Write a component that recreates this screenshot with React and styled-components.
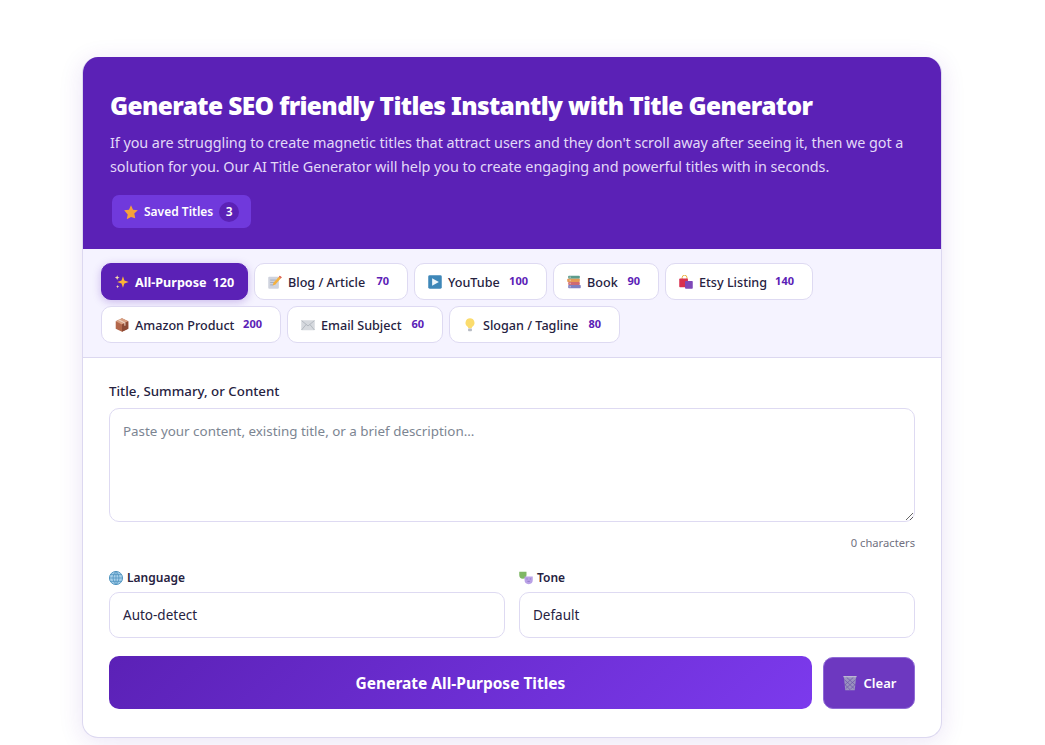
import React from 'react'
import styled, { createGlobalStyle } from 'styled-components'

const GlobalStyle = createGlobalStyle`
  html, body {
    margin: 0;
    background: #fff;
    font-family: "Noto Sans", "Open Sans", sans-serif;
    color: #1e1b3a;
    overflow: hidden;
  }
  * { box-sizing: border-box; }
`

const Page = styled.div`
  padding: 57px 0 0 82px;
  height: 745px;
  overflow: hidden;
`

const Card = styled.div`
  width: 860px;
  background: #fff;
  border: 1px solid #dcd8f0;
  border-top: 0;
  border-radius: 16px;
  overflow: hidden;
  box-shadow: 0 4px 24px rgba(91, 33, 182, 0.12);
`

const Header = styled.header`
  background: #5b21b6;
  height: 192px;
  padding: 32px 27px 0;
  color: #fff;
`

const Title = styled.h1`
  margin: 0;
  font-size: 24.5px;
  line-height: 34px;
  font-weight: 900;
  letter-spacing: -0.63px;
`

const Intro = styled.p`
  margin: 8px 0 0;
  font-size: 14.4px;
  line-height: 24px;
  color: #e2d9f8;
  letter-spacing: -0.056px;
`

const SavedButton = styled.button`
  display: inline-flex;
  align-items: center;
  height: 33px;
  margin: 16px 0 0 2px;
  padding: 0 12px;
  gap: 6px;
  border: 0;
  border-radius: 7px;
  background: #7039dc;
  color: #fff;
  font: 600 12px "Noto Sans", sans-serif;
`

const SavedCount = styled.span`
  display: inline-flex;
  align-items: center;
  justify-content: center;
  width: 20px;
  height: 20px;
  border-radius: 50%;
  background: #5b21b6;
  font-size: 12px;
`

const TabBar = styled.nav`
  display: flex;
  flex-wrap: wrap;
  gap: 6px;
  height: 109px;
  padding: 14px 18px 0;
  background: #f5f3ff;
  border-bottom: 1px solid #dcd8f0;
  align-content: flex-start;
`

const Tab = styled.button`
  display: inline-flex;
  align-items: center;
  width: ${p => p.$width}px;
  height: 37px;
  padding: 1px ${p => (p.$active ? 13 : 18)}px 0 13px;
  gap: 6px;
  white-space: nowrap;
  border-radius: 10px;
  border: 1px solid ${p => (p.$active ? '#5b21b6' : '#dedaf2')};
  background: ${p => (p.$active ? '#5b21b6' : '#fff')};
  color: ${p => (p.$active ? '#fff' : '#26223f')};
  font: ${p => (p.$active ? 700 : 500)} 12.6px "Noto Sans", sans-serif;
  box-shadow: ${p => (p.$active ? '0 2px 8px rgba(91, 33, 182, 0.28)' : 'none')};
`

const TabCount = styled.span`
  margin-left: auto;
  margin-top: ${p => (p.$active ? 0 : -4)}px;
  font-size: ${p => (p.$active ? 12.6 : 11)}px;
  font-weight: 700;
  color: ${p => (p.$active ? '#fff' : '#5b21b6')};
`

const Form = styled.div`
  padding: 24px 26px 28px;
`

const Label = styled.label`
  display: flex;
  align-items: center;
  gap: 4px;
  font-size: ${p => (p.$small ? 12 : 13.3)}px;
  font-weight: ${p => (p.$small ? 600 : 500)};
  line-height: 18px;
  color: #26223f;
`

const TextArea = styled.textarea`
  display: block;
  width: 100%;
  height: 114px;
  margin-top: 8px;
  padding: 12px 13px;
  border: 1px solid #dedaf2;
  border-radius: 10px;
  resize: vertical;
  outline: 0;
  font: 400 13.4px/20px "Noto Sans", sans-serif;
  &::placeholder { color: #7c8592; opacity: 1; }
`

const CharCount = styled.div`
  margin-top: 13px;
  text-align: right;
  font-size: 11.2px;
  line-height: 16px;
  color: #71717f;
`

const SelectRow = styled.div`
  display: grid;
  grid-template-columns: 1fr 1fr;
  gap: 14px;
  margin-top: 18px;
`

const Field = styled.div`
  display: flex;
  flex-direction: column;
  gap: 5px;
`

const FakeSelect = styled.div`
  height: 46px;
  display: flex;
  align-items: center;
  padding: 0 13px;
  border: 1px solid #dedaf2;
  border-radius: 10px;
  font-size: 13.5px;
  color: #26223f;
`

const Actions = styled.div`
  display: flex;
  gap: 11px;
  margin-top: 18px;
`

const GenerateButton = styled.button`
  flex: 1;
  height: 53px;
  border: 0;
  border-radius: 10px;
  background: linear-gradient(135deg, #5b21b6, #7c3aed);
  color: #fff;
  font: 700 15.5px "Noto Sans", sans-serif;
`

const ClearButton = styled.button`
  display: inline-flex;
  align-items: center;
  justify-content: center;
  gap: 6px;
  width: 92px;
  height: 52px;
  margin-top: 1px;
  border: 1px solid #8f6ad6;
  border-radius: 10px;
  background: #6d38c0;
  color: #fff;
  font: 600 13px "Noto Sans", sans-serif;
`

const Glyph = styled.svg`
  flex: none;
  display: block;
`

// colour emoji have no font here, so each one is a small drawing
const icons = {
  star: <path d="M8 1l2.100 4.600 5 .6-3.700 3.400 1 4.900L8 13.100l-4.400 2.400 1-4.900L.9 6.200l5-.6z" fill="#f6a13a" />,
  sparkles: (
    <>
      <path d="M9 2l1.500 4.500L15 8l-4.500 1.500L9 14 7.500 9.500 3 8l4.500-1.500z" fill="#fbb437" />
      <path d="M3 1l.7 1.800L5.500 3.500l-1.800.7L3 6l-.7-1.800L.5 3.500l1.800-.7zM3.500 11l.5 1.300 1.300.5-1.300.5-.5 1.300-.5-1.300-1.300-.5 1.300-.5z" fill="#fde3a7" />
    </>
  ),
  memo: (
    <>
      <rect x="1" y="2.500" width="11" height="12.500" rx="1" fill="#cfd3de" />
      <path d="M3 6h6M3 8.500h4M3 11h3" stroke="#9aa1b3" strokeWidth=".8" />
      <path d="M13 1.500l2 1.700-6.500 7.300-2.800 1 .7-2.800z" fill="#f4b13f" />
      <path d="M13 1.500l2 1.700-1 1.100-2-1.700z" fill="#d9606b" />
    </>
  ),
  play: (
    <>
      <rect x="1" y="1" width="14" height="14" rx="1.500" fill="#3e87b8" />
      <path d="M5 4l7 4-7 4z" fill="#eef6fb" />
    </>
  ),
  books: (
    <>
      <rect x="2" y="1.500" width="12" height="3.200" rx=".8" fill="#5d9c8c" />
      <rect x="1" y="4.700" width="13" height="3.200" rx=".8" fill="#e59a55" />
      <rect x="2" y="7.900" width="12" height="3.200" rx=".8" fill="#cf6a72" />
      <rect x="2" y="11.100" width="13" height="3.400" rx=".8" fill="#7f7fc0" />
      <path d="M4 2.300v1.600M4 5.500v1.600M4 8.700v1.600M4 12v1.600" stroke="#eee" strokeWidth=".7" />
    </>
  ),
  bags: (
    <>
      <path d="M4 5V3.500a2.500 2.500 0 015 0V5" fill="none" stroke="#e9b23e" strokeWidth="1" />
      <rect x="1" y="4.500" width="9" height="9" rx=".8" fill="#d9304f" />
      <rect x="7" y="7" width="8" height="8" rx=".8" fill="#7e48b8" />
    </>
  ),
  box: (
    <>
      <path d="M8 1l6.500 3.200v7.600L8 15l-6.500-3.200V4.200z" fill="#b3674a" />
      <path d="M8 1l6.500 3.200L8 7.500 1.500 4.200z" fill="#d9a184" />
      <path d="M8 7.500V15l6.500-3.200V4.200z" fill="#8c4a35" />
      <path d="M4.500 2.600l6.500 3.300v2.800" stroke="#ecd3c3" strokeWidth="1.100" fill="none" />
    </>
  ),
  mail: (
    <>
      <rect x="1" y="3" width="14" height="10.500" rx=".8" fill="#d6d9de" />
      <path d="M1.300 3.400L8 9l6.700-5.600M1.300 13.200L6 7.500M14.700 13.200L10 7.500" stroke="#a9afb8" strokeWidth=".8" fill="none" />
    </>
  ),
  bulb: (
    <>
      <path d="M8 1a4.700 4.700 0 00-2.700 8.500c.6.500.9 1 .9 1.800h3.600c0-.8.300-1.300.9-1.800A4.700 4.700 0 008 1z" fill="#fbdc6d" />
      <rect x="6" y="11.500" width="4" height="3" rx=".8" fill="#b8bcc4" />
    </>
  ),
  globe: (
    <>
      <circle cx="8" cy="8" r="6.800" fill="#a8d0ea" stroke="#4f93bf" strokeWidth="1" />
      <path d="M1.500 8h13M8 1.200v13.600M2.500 4.500h11M2.500 11.500h11M8 1.200C4 4.500 4 11.500 8 14.800M8 1.200c4 3.300 4 10.300 0 13.600" fill="none" stroke="#4f93bf" strokeWidth=".8" />
    </>
  ),
  masks: (
    <>
      <path d="M1 1.500h7.500v3.500a3.750 3.750 0 01-7.500 0z" fill="#7fb765" />
      <path d="M6.500 6.500H15v3.700a4.200 4.200 0 01-8.500 0z" fill="#b9a1e6" />
      <path d="M8.500 9h1.200M12 9h1.200M9.500 11.500h2.500" stroke="#8a6fc4" strokeWidth=".8" />
    </>
  ),
  bin: (
    <>
      <path d="M2.500 2.500h11l-1.200 12H3.700z" fill="#9a93bf" />
      <path d="M2 2.200h12" stroke="#bdb8d4" strokeWidth="1.200" />
      <path d="M3 5l8.800 8M13 5l-8.800 8M3 9l5 5M13 9l-5 5M5 3l8 7M11 3l-8 7" stroke="#6a4fa8" strokeWidth=".6" />
    </>
  ),
}

const Emoji = ({ name, size = 14 }) => (
  <Glyph width={size} height={size} viewBox="0.75 0.75 14.5 14.5">{icons[name]}</Glyph>
)

const tabs = [
  { icon: 'sparkles', name: 'All-Purpose', count: 120, width: 147, active: true },
  { icon: 'memo', name: 'Blog / Article', count: 70, width: 154 },
  { icon: 'play', name: 'YouTube', count: 100, width: 133 },
  { icon: 'books', name: 'Book', count: 90, width: 106 },
  { icon: 'bags', name: 'Etsy Listing', count: 140, width: 148 },
  { icon: 'box', name: 'Amazon Product', count: 200, width: 180 },
  { icon: 'mail', name: 'Email Subject', count: 60, width: 156 },
  { icon: 'bulb', name: 'Slogan / Tagline', count: 80, width: 171 },
]

const App = () => (
  <Page>
    <GlobalStyle />
    <Card>
      <Header>
        <Title>Generate SEO friendly Titles Instantly with Title Generator</Title>
        <Intro>
          If you are struggling to create magnetic titles that attract users and they don't scroll away after seeing it, then we got a solution for you. Our AI Title Generator will help you to create engaging and powerful titles with in seconds.
        </Intro>
        <SavedButton>
          <Emoji name="star" />
          Saved Titles
          <SavedCount>3</SavedCount>
        </SavedButton>
      </Header>
      <TabBar>
        {tabs.map(tab => (
          <Tab key={tab.name} $active={tab.active} $width={tab.width}>
            <Emoji name={tab.icon} />
            {tab.name}
            <TabCount $active={tab.active}>{tab.count}</TabCount>
          </Tab>
        ))}
      </TabBar>
      <Form>
        <Label>Title, Summary, or Content</Label>
        <TextArea placeholder="Paste your content, existing title, or a brief description..." />
        <CharCount>0 characters</CharCount>
        <SelectRow>
          <Field>
            <Label $small><Emoji name="globe" />Language</Label>
            <FakeSelect>Auto-detect</FakeSelect>
          </Field>
          <Field>
            <Label $small><Emoji name="masks" />Tone</Label>
            <FakeSelect>Default</FakeSelect>
          </Field>
        </SelectRow>
        <Actions>
          <GenerateButton>Generate All-Purpose Titles</GenerateButton>
          <ClearButton><Emoji name="bin" size={16} />Clear</ClearButton>
        </Actions>
      </Form>
    </Card>
  </Page>
)

export default App
